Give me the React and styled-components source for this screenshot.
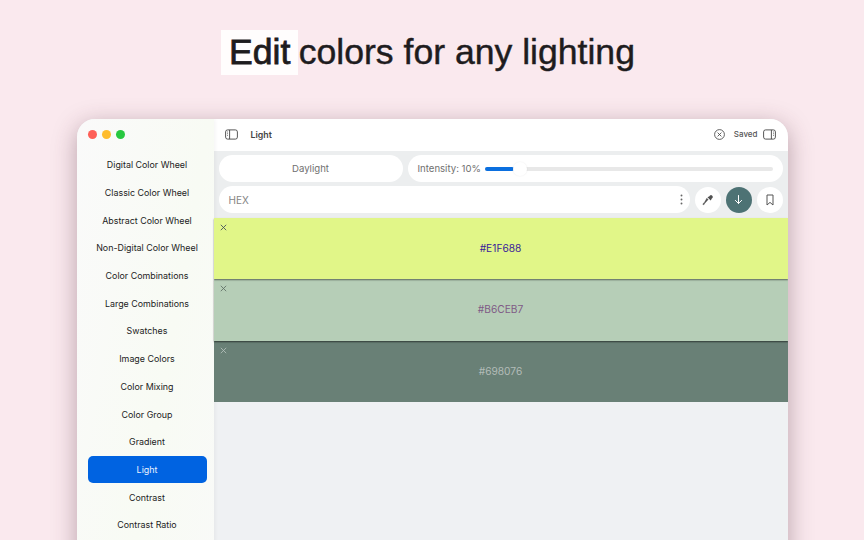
import React from 'react';
import styled, { createGlobalStyle } from 'styled-components';

const GlobalStyle = createGlobalStyle`
  html, body {
    margin: 0;
    height: 100%;
    overflow: hidden;
    background: #fae9ee;
  }
  * { box-sizing: border-box; }
  body {
    font-family: Inter, "Liberation Sans", sans-serif;
    -webkit-font-smoothing: antialiased;
  }
`;

const Page = styled.div`
  width: 864px;
  height: 540px;
  overflow: hidden;
  display: flex;
  flex-direction: column;
  align-items: center;
`;

const Headline = styled.h1`
  margin: 30px 0 44px;
  height: 45px;
  padding-right: 8px;
  line-height: 45px;
  font-family: "Liberation Sans", Arial, sans-serif;
  font-size: 35.6px;
  font-weight: 400;
  color: #1e1c1e;
  white-space: pre;
  -webkit-text-stroke: 0.45px #1e1c1e;
`;

const Highlight = styled.span`
  display: inline-block;
  height: 45px;
  margin-right: -9.5px;
  padding: 0 8px;
  background: #fffdfd;
  -webkit-text-stroke: 0.8px #1e1c1e;
`;

const Window = styled.div`
  width: 711px;
  height: 480px;
  flex-shrink: 0;
  display: flex;
  border-radius: 18px 18px 0 0;
  overflow: hidden;
  background: #eff1f3;
  box-shadow: 0 6px 24px rgba(80, 40, 55, 0.38);
`;

const Sidebar = styled.aside`
  width: 137px;
  flex-shrink: 0;
  padding: 0 7px 0 11px;
  background: linear-gradient(100deg, #fafafa 0%, #f8fbf4 60%, #f9faf8 100%);
  box-shadow: 1px 0 4px rgba(0, 0, 0, 0.05);
  z-index: 1;
`;

const Traffic = styled.div`
  height: 31px;
  display: flex;
  align-items: center;
  gap: 5px;
`;

const Dot = styled.span`
  width: 9px;
  height: 9px;
  border-radius: 50%;
  background: ${({ color }) => color};
`;

const NavList = styled.nav`
  display: flex;
  flex-direction: column;
  padding-top: 1px;
`;

const NavItem = styled.div`
  height: 27.7px;
  display: flex;
  align-items: center;
  justify-content: center;
  border-radius: 5px;
  font-size: 8.9px;
  font-weight: 400;
  white-space: nowrap;
  color: ${({ active }) => (active ? '#eaf2ff' : '#1c1c1c')};
  background: ${({ active }) => (active ? '#0063e1' : 'transparent')};
`;

const Main = styled.main`
  flex: 1;
  min-width: 0;
  display: flex;
  flex-direction: column;
`;

const TitleBar = styled.header`
  height: 32px;
  flex-shrink: 0;
  display: flex;
  align-items: center;
  padding: 0 12px 2px 11px;
  background: #fff;
`;

const Title = styled.span`
  margin-left: 13px;
  font-size: 8.8px;
  font-weight: 600;
  color: #444;
`;

const Spacer = styled.div`
  flex: 1;
`;

const Saved = styled.span`
  margin: 0 5px 0 9px;
  font-size: 8px;
  font-weight: 500;
  color: #555;
`;

const Controls = styled.div`
  flex-shrink: 0;
  display: flex;
  flex-direction: column;
  gap: 4px;
  padding: 4px 5px 5px;
  background: #eceeef;
`;

const Row = styled.div`
  display: flex;
  align-items: center;
  gap: 5px;
`;

const Pill = styled.div`
  height: 27px;
  display: flex;
  align-items: center;
  border-radius: 14px;
  background: #fff;
  font-size: 9.6px;
  color: #6f6f6f;
`;

const ModePill = styled(Pill)`
  width: 184px;
  justify-content: center;
`;

const IntensityPill = styled(Pill)`
  flex: 1;
  padding: 0 10px 0 10px;
  gap: 4px;
`;

const Track = styled.div`
  position: relative;
  flex: 1;
  height: 4px;
  border-radius: 2px;
  background: #e8e8e8;
`;

const TrackFill = styled.div`
  height: 100%;
  border-radius: 2px;
  background: #0b6fdf;
`;

const Thumb = styled.span`
  position: absolute;
  top: -5px;
  width: 14px;
  height: 14px;
  margin-left: -1px;
  border-radius: 50%;
  background: #fff;
  box-shadow: 0 0 2px rgba(0, 0, 0, 0.08);
`;

const HexPill = styled(Pill)`
  flex: 1;
  padding: 0 7px 0 10px;
  justify-content: space-between;
  color: #858585;
  font-size: 10px;
`;

const RoundButton = styled.div`
  width: 26px;
  height: 26px;
  flex-shrink: 0;
  display: flex;
  align-items: center;
  justify-content: center;
  border-radius: 50%;
  background: ${({ primary }) => (primary ? '#4d7274' : '#fff')};
`;

const Swatch = styled.div`
  position: relative;
  height: 61.3px;
  flex-shrink: 0;
  display: flex;
  align-items: center;
  justify-content: center;
  padding-bottom: 1px;
  font-size: 10.2px;
  background: ${({ bg }) => bg};
  color: ${({ fg }) => fg};
  box-shadow: 0 1px 1.5px rgba(0, 0, 0, ${({ edge }) => edge});
  z-index: ${({ layer }) => layer};
`;

const Close = styled.span`
  position: absolute;
  top: 6px;
  left: 6px;
  display: flex;
  color: ${({ fg }) => fg};
`;

const items = [
  'Digital Color Wheel',
  'Classic Color Wheel',
  'Abstract Color Wheel',
  'Non-Digital Color Wheel',
  'Color Combinations',
  'Large Combinations',
  'Swatches',
  'Image Colors',
  'Color Mixing',
  'Color Group',
  'Gradient',
  'Light',
  'Contrast',
  'Contrast Ratio',
];

const swatches = [
  { hex: '#E1F688', bg: '#e1f688', fg: '#3a1c9a', x: '#3d4a5a', edge: 0.5 },
  { hex: '#B6CEB7', bg: '#b6ceb7', fg: '#7f5a86', x: '#5f6f66', edge: 0.55 },
  { hex: '#698076', bg: '#698076', fg: '#b3bcb8', x: '#b3bfba', edge: 0 },
];

const SidebarIcon = ({ flip }) => (
  <svg width="13" height="11" viewBox="0 0 13 11" fill="none" stroke="#444" strokeWidth="0.9">
    <rect x="0.6" y="0.9" width="11.8" height="9.2" rx="2" />
    <path d={flip ? 'M8.4 1v9' : 'M4.6 1v9'} />
    {flip ? (
      <path d="M10.1 3h.7M10.1 4.7h.7M10.1 6.4h.7" />
    ) : (
      <path d="M2.2 3h.7M2.2 4.7h.7M2.2 6.4h.7" />
    )}
  </svg>
);

const CircleX = () => (
  <svg width="11" height="11" viewBox="0 0 11 11" fill="none" stroke="#444" strokeWidth="0.85">
    <circle cx="5.5" cy="5.5" r="4.9" />
    <path d="M3.6 3.6l3.8 3.8M7.4 3.6l-3.8 3.8" />
  </svg>
);

const Dots = () => (
  <svg width="3" height="11" viewBox="0 0 3 11" fill="#666">
    <circle cx="1.5" cy="1.5" r="0.95" />
    <circle cx="1.5" cy="5.5" r="0.95" />
    <circle cx="1.5" cy="9.5" r="0.95" />
  </svg>
);

const Dropper = () => (
  <svg width="12" height="12" viewBox="0 0 12 12" fill="#505050">
    <path d="M8 1.6a1.4 1.4 0 0 1 2 0l.4.4a1.4 1.4 0 0 1 0 2L9.1 5.3l.4.4-.8.8-3.2-3.2.8-.8.4.4z" />
    <path d="M4.8 4.2l1.4 1.4-3.6 3.9-.5 1-.7.3-.6-.6.3-.7 1-.5z" stroke="#505050" strokeWidth="0.4" />
  </svg>
);

const ArrowDown = () => (
  <svg width="11" height="11" viewBox="0 0 11 11" fill="none" stroke="#fff" strokeWidth="1" strokeLinecap="round" strokeLinejoin="round">
    <path d="M5.5 1.5v8M2.4 6.4l3.1 3.1 3.1-3.1" />
  </svg>
);

const Bookmark = () => (
  <svg width="10" height="12" viewBox="0 0 10 12" fill="none" stroke="#555" strokeWidth="1" strokeLinejoin="round">
    <path d="M2 1h6v10L5 8.4 2 11z" />
  </svg>
);

const Cross = () => (
  <svg width="7" height="7" viewBox="0 0 7 7" fill="none" stroke="currentColor" strokeWidth="0.85">
    <path d="M.8.8l5.4 5.4M6.2.8L.8 6.2" />
  </svg>
);

export default function App() {
  const intensity = 10;
  return (
    <Page>
      <GlobalStyle />
      <Headline>
        <Highlight>Edit</Highlight> colors for any lighting
      </Headline>
      <Window>
        <Sidebar>
          <Traffic>
            <Dot color="#fe5f57" />
            <Dot color="#febc2e" />
            <Dot color="#28c840" />
          </Traffic>
          <NavList>
            {items.map((name) => (
              <NavItem key={name} active={name === 'Light' || undefined}>
                {name}
              </NavItem>
            ))}
          </NavList>
        </Sidebar>
        <Main>
          <TitleBar>
            <SidebarIcon />
            <Title>Light</Title>
            <Spacer />
            <CircleX />
            <Saved>Saved</Saved>
            <SidebarIcon flip />
          </TitleBar>
          <Controls>
            <Row>
              <ModePill>Daylight</ModePill>
              <IntensityPill>
                Intensity: 10%
                <Track>
                  <TrackFill style={{ width: `${intensity}%` }} />
                  <Thumb style={{ left: `${intensity}%` }} />
                </Track>
              </IntensityPill>
            </Row>
            <Row>
              <HexPill>
                HEX
                <Dots />
              </HexPill>
              <RoundButton>
                <Dropper />
              </RoundButton>
              <RoundButton primary>
                <ArrowDown />
              </RoundButton>
              <RoundButton>
                <Bookmark />
              </RoundButton>
            </Row>
          </Controls>
          {swatches.map((s, i) => (
            <Swatch key={s.hex} bg={s.bg} fg={s.fg} edge={s.edge} layer={3 - i}>
              <Close fg={s.x}>
                <Cross />
              </Close>
              {s.hex}
            </Swatch>
          ))}
        </Main>
      </Window>
    </Page>
  );
}
